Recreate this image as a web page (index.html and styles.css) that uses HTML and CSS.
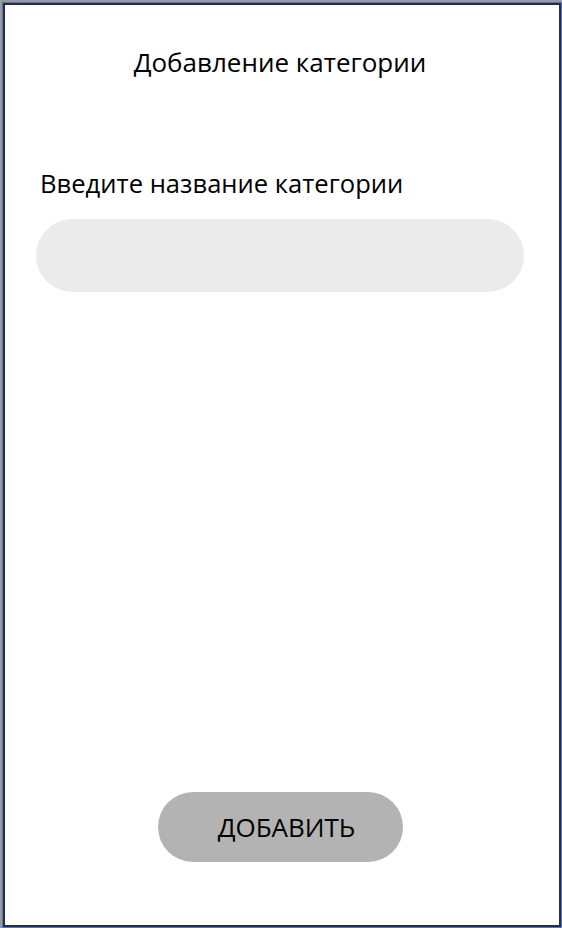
FILE: index.html
```html
<!DOCTYPE html>
<html lang="ru">
<head>
<meta charset="utf-8">
<link rel="stylesheet" href="styles.css">
</head>
<body>
<div class="outer">
  <div class="screen">
    <h1 class="title">Добавление категории</h1>
    <label class="label" for="cat">Введите название категории</label>
    <input class="field" id="cat" type="text">
    <div class="spacer"></div>
    <button class="btn" type="button">ДОБАВИТЬ</button>
  </div>
</div>
</body>
</html>
```
FILE: styles.css
```css
html, body {
  margin: 0;
  padding: 0;
  background: #ffffff;
}
body {
  width: 562px;
  height: 928px;
  padding: 2px 0 0 2px;
  box-sizing: border-box;
  background: linear-gradient(#9a9a9a, #9a9a9a) left top / 2px 100% no-repeat,
              linear-gradient(#9a9a9a, #9a9a9a) left top / 100% 2px no-repeat,
              #ffffff;
  font-family: "Open Sans", "Noto Sans", sans-serif;
  color: #000;
}
.outer {
  width: 560px;
  height: 926px;
  box-sizing: border-box;
  border: 1px solid #4d74e0;
}
.screen {
  height: 100%;
  box-sizing: border-box;
  border: 2px solid #2e2e2e;
  display: flex;
  flex-direction: column;
  padding: 0 35px 63px 31px;
}
.title {
  margin: 40px 0 0;
  font-size: 26px;
  font-weight: 400;
  text-align: center;
  line-height: 34px;
}
.label {
  margin: 88px 0 0 4px;
  font-size: 25.6px;
  line-height: 34px;
}
.field {
  margin-top: 18px;
  height: 73px;
  box-sizing: border-box;
  padding: 0 24px;
  border: none;
  border-radius: 37px;
  background: #ebebeb;
  outline: none;
  font-family: inherit;
  font-size: 22px;
}
.spacer {
  flex: 1;
}
.btn {
  align-self: flex-start;
  margin-left: 122px;
  width: 245px;
  height: 70px;
  border: none;
  border-radius: 35px;
  background: #b3b3b3;
  font-family: inherit;
  font-size: 26px;
  color: #000;
  padding: 0 0 0 12px;
}
```
